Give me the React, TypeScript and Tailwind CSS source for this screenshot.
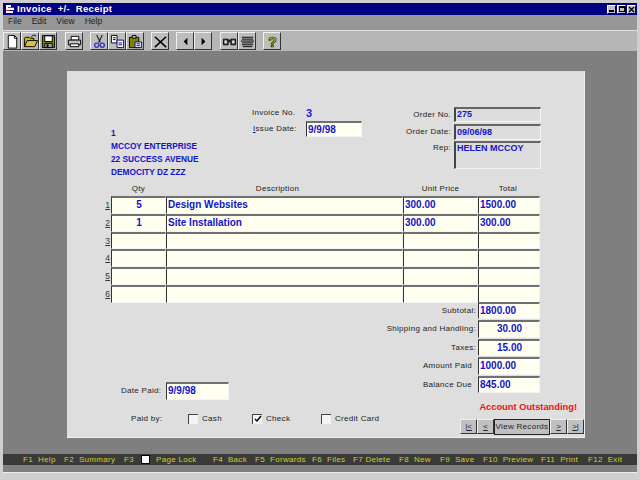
import React from "react";

const Sv = ({ children }: { children: React.ReactNode }) => (
  <svg width="15" height="15" viewBox="0 0 16 16">{children}</svg>
);

const icons: Record<string, React.ReactNode> = {
  new: <Sv><path d="M3.5 1.5h6.5l2.5 2.5v11h-9z" fill="#fff" stroke="#000" /><path d="M10 1.5v3h3" fill="none" stroke="#000" /></Sv>,
  open: <Sv><path d="M1.5 13.5v-9l1-1h4l1 1h4v2" fill="#c8b800" stroke="#000" /><path d="M4.5 7h11l-3 6.5H1.5z" fill="#e0c040" stroke="#000" /><path d="M9 3l2-2 3 1" fill="none" stroke="#000" /></Sv>,
  save: <Sv><path d="M1.5 1.5h13v13h-13z" fill="#808000" stroke="#000" /><path d="M4 2h8v6H4z" fill="#fff" stroke="#000" /><path d="M4 10h8v4.5H4z" fill="#a0a0a0" stroke="#000" /><path d="M6 11h2v3H6z" fill="#000" /></Sv>,
  print: <Sv><path d="M4.5 2.5h8v4h-8z" fill="#fff" stroke="#000" /><path d="M1.5 6.5h13v5h-13z" fill="#c0c0c0" stroke="#000" /><path d="M3.5 10.5h9v3h-9z" fill="#fff" stroke="#000" /></Sv>,
  cut: <Sv><path d="M5 1l4 8M11 1L7 9" stroke="#222" strokeWidth="1.2" fill="none" /><circle cx="5" cy="12" r="2.2" fill="none" stroke="#3030c0" strokeWidth="1.4" /><circle cx="11" cy="12" r="2.2" fill="none" stroke="#3030c0" strokeWidth="1.4" /></Sv>,
  copy: <Sv><path d="M1.5 1.5h6v8h-6z" fill="#fff" stroke="#000" /><path d="M3 4h3M3 6h3" stroke="#000" /><path d="M7.5 6.5h7v8h-7z" fill="#fff" stroke="#00008a" /><path d="M9 9.5h4M9 11.5h4" stroke="#00008a" /></Sv>,
  paste: <Sv><path d="M1.5 3.5h10v11h-10z" fill="#808000" stroke="#000" /><path d="M4.5 1.5h4v3h-4z" fill="#c0c0c0" stroke="#000" /><path d="M7.5 8.5h7v6h-7z" fill="#fff" stroke="#00008a" /><path d="M9 10.5h4M9 12.5h4" stroke="#00008a" /></Sv>,
  del: <Sv><path d="M2 3l12 11M14 3L2 14" stroke="#000" strokeWidth="1.6" fill="none" /></Sv>,
  left: <Sv><path d="M10 4v8L6 8z" fill="#000" /></Sv>,
  right: <Sv><path d="M6 4v8l4-4z" fill="#000" /></Sv>,
  find: <Sv><path d="M1.5 5.5h5v6h-5zM9.5 5.5h5v6h-5z" fill="#555" stroke="#000" /><path d="M6 6h4v3H6z" fill="#222" /><circle cx="4" cy="8.5" r="1.5" fill="#ddd" /><circle cx="12" cy="8.5" r="1.5" fill="#ddd" /></Sv>,
  lines: <Sv><path d="M2 3.5h12M2 5.5h12M1 7.5h14M2 9.5h12M2 11.5h12M3 13.5h10" stroke="#000" /></Sv>,
  help: <Sv><text x="8" y="14" textAnchor="middle" fontFamily="Liberation Sans" fontWeight="700" fontSize="15" fill="#e8e800" stroke="#000" strokeWidth="0.7">?</text></Sv>,
};

const ToolBtn = ({ n }: { n: string }) => (
  <div className="w-[18px] h-[18px] flex items-center justify-center bg-[#bdbdbd] border-t border-l border-[#f0f0f0] border-r border-b border-r-[#333] border-b-[#333]">
    {icons[n]}
  </div>
);

const Group = ({ names, mr }: { names: string[]; mr: string }) => (
  <div className={`flex ${mr}`}>{names.map((n) => <ToolBtn key={n} n={n} />)}</div>
);

const WinBtn = ({ children }: { children: React.ReactNode }) => (
  <div className="w-[9px] h-[9px] bg-[#c0c0c0] border-t border-l border-white border-r border-b border-r-black border-b-black flex items-center justify-center">
    {children}
  </div>
);

const Label = ({ children, className = "" }: { children: React.ReactNode; className?: string }) => (
  <div className={`text-[8px] tracking-[0.3px] leading-[10px] text-[#222] whitespace-nowrap ${className}`}>{children}</div>
);

const Val = ({ children, className = "" }: { children?: React.ReactNode; className?: string }) => (
  <div className={`h-full bg-[#ffffef] border-t-2 border-l border-t-[#707070] border-l-[#333] border-r border-b border-r-[#f4f4f4] border-b-[#f4f4f4] pl-px text-[10px] font-bold leading-[13px] text-[#1414c8] whitespace-nowrap overflow-hidden ${className}`}>
    {children}
  </div>
);

const Grey = ({ children, h, lh }: { children: React.ReactNode; h: string; lh: string }) => (
  <div className={`w-[87px] ${h} ${lh} bg-[#dcdcdc] border-t-2 border-l-2 border-t-[#666] border-l-[#444] border-r border-b border-r-[#f4f4f4] border-b-[#f4f4f4] text-[9px] font-bold text-[#1414c8] px-px whitespace-nowrap`}>
    {children}
  </div>
);

const rows: [string, string, string, string][] = [
  ["5", "Design Websites", "300.00", "1500.00"],
  ["1", "Site Installation", "300.00", "300.00"],
  ["", "", "", ""],
  ["", "", "", ""],
  ["", "", "", ""],
  ["", "", "", ""],
];

const totals: [string, string, string, boolean][] = [
  ["Subtotal:", "1800.00", "", false],
  ["Shipping and Handling:", "30.00", "text-center", false],
  ["Taxes:", "15.00", "text-center", false],
  ["Amount Paid", "1000.00", "", true],
  ["Balance Due", "845.00", "", true],
];

const Check = ({ label, checked, w }: { label: string; checked?: boolean; w: string }) => (
  <div className={`flex items-center gap-[4px] shrink-0 ${w}`}>
    <div className="w-[10px] h-[10px] bg-[#f4f4f4] border-t border-l border-[#444] flex items-center justify-center">
      {checked && (
        <svg width="8" height="8" viewBox="0 0 8 8"><path d="M1 4l2 2 4-5" stroke="#000" strokeWidth="1.5" fill="none" /></svg>
      )}
    </div>
    <Label>{label}</Label>
  </div>
);

const NavBtn = ({ children }: { children: React.ReactNode }) => (
  <div className="w-[17px] h-[15px] bg-[#c0c0c0] border-t border-l border-[#f0f0f0] border-r border-b border-r-[#333] border-b-[#333] flex items-center justify-center text-[8px] leading-none text-[#222] underline whitespace-nowrap">
    {children}
  </div>
);

const fkeys: [string, string][] = [
  ["F4  Back", "w-[42px]"],
  ["F5  Forwards", "w-[57px]"],
  ["F6  Files", "w-[41px]"],
  ["F7 Delete", "w-[46px]"],
  ["F8  New", "w-[41px]"],
  ["F9  Save", "w-[43px]"],
  ["F10  Preview", "w-[58px]"],
  ["F11  Print", "w-[47px]"],
  ["F12  Exit", "w-[40px]"],
];

export default function App() {
  return (
    <div className="w-[640px] h-[480px] overflow-hidden bg-[#cfcfcf] font-['Liberation_Sans',Arial,sans-serif] flex flex-col pt-[3px] pl-[3px] pr-[3px]">
      {/* title */}
      <div className="h-[12px] shrink-0 bg-[#000080] flex items-center text-white pl-[2px] pr-[1px]">
        <svg width="10" height="10" viewBox="0 0 10 10" shapeRendering="crispEdges"><path d="M1 1h5v2H3v1h6v2H3v1h5v2H1z" fill="#fff" /><path d="M3 3h6v1H3zM1 6h3v1H1z" fill="#d02020" /></svg>
        <span className="ml-[2px] text-[9.5px] font-bold tracking-[0.3px] leading-none whitespace-pre">Invoice  +/-  Receipt</span>
        <div className="ml-auto flex gap-[1px]">
          <WinBtn><div className="w-[5px] h-[2px] bg-black mt-[3px]" /></WinBtn>
          <WinBtn><div className="w-[6px] h-[6px] border border-black border-t-2" /></WinBtn>
          <WinBtn><svg width="7" height="7" viewBox="0 0 7 7"><path d="M1 1l5 5M6 1L1 6" stroke="#000" strokeWidth="1.4" /></svg></WinBtn>
        </div>
      </div>
      {/* menu */}
      <div className="h-[13px] shrink-0 bg-[#979797] flex items-center pl-[5px] gap-[10px] text-[8.5px] leading-none text-[#222]">
        <span>File</span><span>Edit</span><span>View</span><span>Help</span>
      </div>
      <div className="h-[2px] shrink-0 bg-[#979797]" />
      {/* toolbar */}
      <div className="h-[21px] shrink-0 bg-[#b6b6b6] border-t border-[#dedede] flex items-center">
        <Group names={["new", "open", "save"]} mr="mr-[8px]" />
        <Group names={["print"]} mr="mr-[7px]" />
        <Group names={["cut", "copy", "paste"]} mr="mr-[7px]" />
        <Group names={["del"]} mr="mr-[7px]" />
        <Group names={["left", "right"]} mr="mr-[8px]" />
        <Group names={["find", "lines"]} mr="mr-[7px]" />
        <Group names={["help"]} mr="mr-0" />
      </div>
      {/* client */}
      <div className="h-[422px] shrink-0 bg-[#7f7f7f] flex flex-col pt-[20px] border-b border-[#eee]">
        <div className="ml-[64px] w-[518px] h-[367px] shrink-0 bg-[#dedede] border-r border-b border-[#f0f0f0] pl-[33px] flex flex-col">
          {/* header */}
          <div className="h-[112px] shrink-0 flex">
            <div className="w-[152px] pl-[11px] pt-[56px] text-[8.3px] font-bold leading-[13px] text-[#1414c8] whitespace-nowrap">
              <div>1</div>
              <div>MCCOY ENTERPRISE</div>
              <div>22 SUCCESS AVENUE</div>
              <div>DEMOCITY DZ ZZZ</div>
            </div>
            <div className="w-[133px] pt-[36px]">
              <div className="flex items-center h-[12px]">
                <Label className="w-[54px]">Invoice No.</Label>
                <span className="text-[11px] font-bold text-[#2020e0] leading-none">3</span>
              </div>
              <div className="flex items-center h-[16px] mt-[2px]">
                <Label className="w-[54px] pl-px"><span className="underline">I</span>ssue Date:</Label>
                <div className="w-[56px] h-[16px]"><Val>9/9/98</Val></div>
              </div>
            </div>
            <div className="w-[156px] pt-[36px] flex flex-col items-end gap-[2px]">
              <div className="flex items-center gap-[3px]"><Label>Order No.</Label><Grey h="h-[15px]" lh="leading-[11px]">275</Grey></div>
              <div className="flex items-center gap-[3px]"><Label>Order Date:</Label><Grey h="h-[16px]" lh="leading-[12px]">09/06/98</Grey></div>
              <div className="flex items-start gap-[3px] -mt-px"><Label className="pt-[2px]">Rep:</Label><Grey h="h-[28px]" lh="leading-[10px]">HELEN MCCOY</Grey></div>
            </div>
          </div>
          {/* table */}
          <div className="grid grid-cols-[11px_55px_237px_75px_62px] grid-rows-[13px_repeat(6,17.8px)] w-[440px]">
            <div />
            <Label className="text-center pt-px">Qty</Label>
            <Label className="text-center pt-px pr-[14px]">Description</Label>
            <Label className="text-center pt-px">Unit Price</Label>
            <Label className="text-center pt-px pr-[2px]">Total</Label>
            {rows.map((r, i) => (
              <React.Fragment key={i}>
                <div className="text-[8.5px] text-[#333] underline leading-[18px] text-right pr-px">{i + 1}</div>
                <Val className="text-center">{r[0]}</Val>
                <Val>{r[1]}</Val>
                <Val>{r[2]}</Val>
                <Val>{r[3]}</Val>
              </React.Fragment>
            ))}
          </div>
          {/* bottom */}
          <div className="flex -mt-px">
            <div className="w-[285px] shrink-0 flex flex-col">
              <div className="flex items-center mt-[80px] pl-[21px] h-[18px]">
                <Label className="w-[45px]">Date Paid:</Label>
                <div className="w-[63px] h-[18px]"><Val>9/9/98</Val></div>
              </div>
              <div className="flex items-center mt-[14px] pl-[31px]">
                <Label className="w-[57px] shrink-0">Paid by:</Label>
                <Check label="Cash" w="w-[64px]" />
                <Check label="Check" w="w-[69px]" checked />
                <Check label="Credit Card" w="w-[60px]" />
              </div>
            </div>
            <div className="flex-1 min-w-0 flex flex-col items-end">
              <div className="w-full pr-[44px] flex flex-col gap-[1px]">
                {totals.map(([l, v, c, up]) => (
                  <div key={l} className="flex items-center justify-end h-[17.5px] gap-[2px]">
                    <Label className={`relative text-right ${up ? "pr-[4px]" : ""}`}>
                      {l}
                      {up && <span className="absolute right-0 -top-[5px] text-[#aaa]">:</span>}
                    </Label>
                    <div className="w-[62px] h-full"><Val className={c}>{v}</Val></div>
                  </div>
                ))}
              </div>
              <div className="mt-[8px] mr-[7px] text-[9.3px] font-bold leading-[12px] text-[#f01010] whitespace-nowrap">Account Outstanding!</div>
              <div className="mt-[6px] flex items-start">
                <NavBtn>|&lt;</NavBtn>
                <NavBtn>&lt;</NavBtn>
                <div className="w-[56px] h-[16px] bg-[#c0c0c0] border border-[#222] flex items-center justify-center text-[8px] tracking-[0.3px] leading-none text-[#222] whitespace-nowrap">View Records</div>
                <NavBtn>&gt;</NavBtn>
                <NavBtn>&gt;|</NavBtn>
              </div>
            </div>
          </div>
        </div>
        {/* status */}
        <div className="mt-[16px] h-[11px] bg-[#3a3a3a] pl-[20px] flex items-center text-[8px] tracking-[0.3px] leading-none text-[#d0d020] whitespace-pre">
          <span className="w-[41px]">F1  Help</span>
          <span className="w-[60px]">F2  Summary</span>
          <span className="w-[17px]">F3</span>
          <span className="w-[9px] h-[9px] bg-white border border-black" />
          <span className="w-[57px] ml-[6px]">Page Lock</span>
          {fkeys.map(([t, w]) => <span key={t} className={w}>{t}</span>)}
        </div>
      </div>
    </div>
  );
}
